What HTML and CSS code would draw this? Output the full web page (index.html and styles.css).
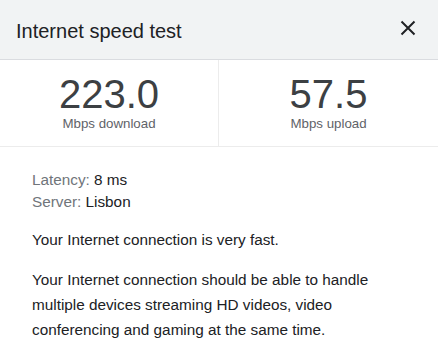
FILE: index.html
```html
<!DOCTYPE html>
<html>
<head>
<meta charset="utf-8">
<link rel="stylesheet" href="styles.css">
</head>
<body>
<div class="dialog">
  <header class="head">
    <h1 class="title">Internet speed test</h1>
    <button class="close" aria-label="Close">
      <svg width="16" height="16" viewBox="0 0 16 16"><path d="M1.5 1.5 L14.5 14.5 M14.5 1.5 L1.5 14.5" stroke="#202124" stroke-width="2" fill="none"/></svg>
    </button>
  </header>
  <section class="stats">
    <div class="stat">
      <div class="num">223.0</div>
      <div class="unit">Mbps download</div>
    </div>
    <div class="stat">
      <div class="num">57.5</div>
      <div class="unit">Mbps upload</div>
    </div>
  </section>
  <section class="body">
    <div class="meta">
      <div><span class="lbl">Latency:</span> 8 ms</div>
      <div><span class="lbl">Server:</span> Lisbon</div>
    </div>
    <p class="p1">Your Internet connection is very fast.</p>
    <p class="p2">Your Internet connection should be able to handle multiple devices streaming HD videos, video conferencing and gaming at the same time.</p>
  </section>
</div>
</body>
</html>
```
FILE: styles.css
```css
* { box-sizing: border-box; }
html, body { margin: 0; padding: 0; background: #fff; }
body { font-family: "Liberation Sans", Arial, sans-serif; color: #202124; }
.dialog { width: 438px; height: 350px; overflow: hidden; }
.head {
  height: 60px;
  background: #f1f3f4;
  border-bottom: 1px solid #dadce0;
  display: flex;
  align-items: center;
  justify-content: space-between;
  padding: 4px 22px 0 16px;
}
.title { margin: 0; font-size: 20px; font-weight: normal; color: #202124; }
.close { border: 0; background: none; padding: 0; width: 16px; height: 16px; display: flex; margin-top: -8px; }
.stats {
  display: grid;
  grid-template-columns: 218px 1fr;
  height: 87px;
  border-bottom: 1px solid #ececec;
}
.stat { display: flex; flex-direction: column; align-items: center; padding-top: 14px; }
.stat + .stat { border-left: 1px solid #ececec; }
.num { font-size: 40px; line-height: 40px; color: #3c4043; }
.unit { font-size: 13.3px; line-height: 16px; color: #5f6368; margin-top: 2px; }
.body { padding: 22px 32px 0; font-size: 15.3px; }
.meta { line-height: 22px; }
.lbl { color: #70757a; }
.p1 { margin: 16px 0 0; line-height: 22px; }
.p2 { margin: 16px 0 0; line-height: 25px; }
```
